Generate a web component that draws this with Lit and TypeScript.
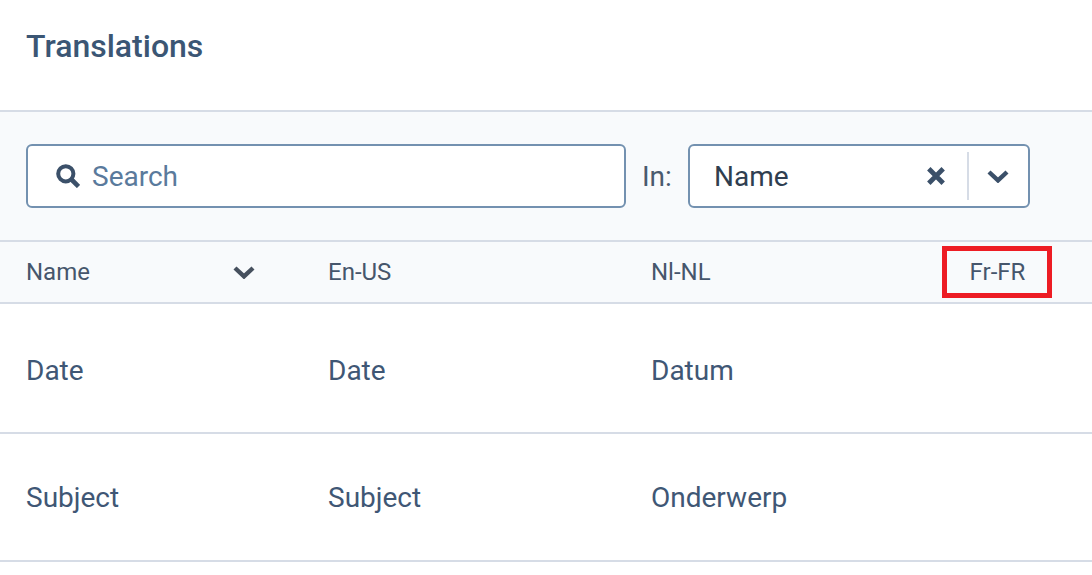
import { LitElement, html, css } from "lit";
import { customElement } from "lit/decorators.js";

const rows = [
  ["Date", "Date", "Datum"],
  ["Subject", "Subject", "Onderwerp"],
];

@customElement("app-root")
export class AppRoot extends LitElement {
  static styles = css`
    :host { display: block; width: 1092px; height: 575px; overflow: hidden; background: #fff; font-family: Roboto, "Liberation Sans", sans-serif; color: #3d5270; }
    .title { height: 110px; box-sizing: border-box; padding: 26px 26px 0; font-size: 32px; line-height: 40px; font-weight: 500; color: #3b5674; }
    .toolbar { height: 130px; box-sizing: border-box; border-top: 2px solid #d6dce6; background: #f8fafc; padding: 32px 26px 0; display: flex; align-items: flex-start; }
    .search { width: 600px; height: 64px; box-sizing: border-box; border: 2px solid #7391b0; border-radius: 6px; background: #fff; display: flex; align-items: center; padding-left: 28px; gap: 12px; font-size: 28px; color: #5a7a9c; }
    .search svg { width: 24px; height: 24px; flex: none; }
    .in { margin-left: 16px; width: 46px; height: 64px; display: flex; align-items: center; font-size: 28px; color: #4a5a6e; }
    .select { width: 342px; height: 64px; box-sizing: border-box; border: 2px solid #7391b0; border-radius: 6px; background: #fff; display: flex; align-items: center; padding-left: 24px; font-size: 28px; color: #2f3e50; }
    .select .val { flex: 1; }
    .x { width: 20px; height: 20px; margin-right: 21px; }
    .sep { width: 2px; height: 48px; background: #d6dce6; }
    .chev { width: 22px; height: 14px; margin: 0 19px 0 18px; }
    .head { height: 64px; box-sizing: border-box; border-top: 2px solid #d6dce6; border-bottom: 2px solid #d6dce6; background: #f8fafc; display: flex; align-items: center; padding-left: 26px; font-size: 24px; color: #46566c; }
    .c1 { width: 302px; flex: none; display: flex; align-items: center; }
    .c2 { width: 323px; flex: none; }
    .c3 { width: 291px; flex: none; }
    .name { width: 207px; }
    .hchev { width: 22px; height: 14px; }
    .fr { width: 110px; height: 52px; box-sizing: border-box; border: 5px solid #ed1c24; display: flex; align-items: center; justify-content: center; flex: none; padding-left: 1px; }
    .row { box-sizing: border-box; border-bottom: 2px solid #d6dce6; display: flex; align-items: center; padding-left: 26px; font-size: 28px; color: #3f5775; }
    .r0 { height: 130px; padding-top: 5px; }
    .r1 { height: 128px; }
  `;

  chevron(cls: string, color: string) {
    return html`<svg class=${cls} viewBox="0 0 22 14"><path d="M2 3 L11 11.4 L20 3" fill="none" stroke=${color} stroke-width="4.4"/></svg>`;
  }

  render() {
    return html`
      <div class="title">Translations</div>
      <div class="toolbar">
        <div class="search">
          <svg viewBox="0 0 24 24"><circle cx="9.8" cy="9.8" r="7.6" fill="none" stroke="#3b5069" stroke-width="4"/><path d="M15.5 15.5 L22.5 22.5" stroke="#3b5069" stroke-width="4.6"/></svg>
          <span>Search</span>
        </div>
        <div class="in">In:</div>
        <div class="select">
          <span class="val">Name</span>
          <svg class="x" viewBox="0 0 20 20"><path d="M2.8 2.8 L17.2 17.2 M17.2 2.8 L2.8 17.2" stroke="#3b5069" stroke-width="4.8"/></svg>
          <div class="sep"></div>
          ${this.chevron("chev", "#3b5069")}
        </div>
      </div>
      <div class="head">
        <div class="c1"><span class="name">Name</span>${this.chevron("hchev", "#46505e")}</div>
        <div class="c2">En-US</div>
        <div class="c3">Nl-NL</div>
        <div class="fr">Fr-FR</div>
      </div>
      ${rows.map((r, i) => html`<div class="row ${i === 0 ? "r0" : "r1"}">
        <div class="c1">${r[0]}</div><div class="c2">${r[1]}</div><div class="c3">${r[2]}</div>
      </div>`)}
    `;
  }
}
